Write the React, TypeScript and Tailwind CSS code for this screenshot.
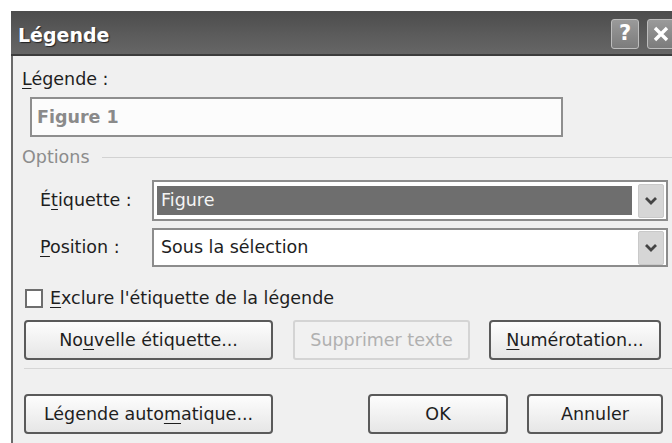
import React from "react";

const font = { fontFamily: '"DejaVu Sans", "Liberation Sans", sans-serif' };

function U({ children }: { children: React.ReactNode }) {
  return <span className="underline decoration-1 underline-offset-[3px]">{children}</span>;
}

function Chevron() {
  return (
    <svg width="14" height="10" viewBox="0 0 14 10">
      <path d="M2 2 L7 7 L12 2" fill="none" stroke="#444444" strokeWidth="2.8" />
    </svg>
  );
}

function Combo({
  value,
  selected,
}: {
  value: string;
  selected?: boolean;
}) {
  return (
    <div className="flex h-full w-[516px] items-center border-2 border-[#8c8c8c] bg-white pl-[3px] pr-[2px]">
      <div className="flex h-full flex-1 items-center py-[4px]">
        <div
          className={
            selected
              ? "flex h-full w-full items-center bg-[#6e6e6e] pl-[4px] text-[#f4f4f4]"
              : "flex h-full w-full items-center pl-[4px] text-[#1e1e1e]"
          }
        >
          {value}
        </div>
      </div>
      <div className="ml-[6px] flex h-[34px] w-[26px] items-center justify-center rounded-[2px] border border-[#c9c9c9] bg-[#d6d6d6]">
        <Chevron />
      </div>
    </div>
  );
}

function Btn({
  children,
  w,
  disabled,
}: {
  children: React.ReactNode;
  w: string;
  disabled?: boolean;
}) {
  return (
    <div
      className={
        disabled
          ? `${w} flex h-[40px] items-center justify-center rounded-[3px] border-2 border-[#d4d4d4] bg-[#f1f1f1] text-[#b0b0b0]`
          : `${w} flex h-[40px] items-center justify-center rounded-[4px] border-2 border-[#5a5a5a] bg-gradient-to-b from-[#fdfdfd] to-[#e6e6e6] text-[#1e1e1e]`
      }
    >
      {children}
    </div>
  );
}

export default function App() {
  return (
    <div className="h-[443px] w-[672px] overflow-hidden bg-white pl-[11px] pt-[11px]" style={font}>
      <div className="flex w-[680px] flex-col">
        {/* title bar */}
        <div className="flex h-[45px] items-center border-b-2 border-[#3c3c3c] bg-gradient-to-b from-[#4c4c4c] via-[#5a5a5a] to-[#666666] pl-[7px] pr-[16px]">
          <span className="pt-[5px] text-[19px] font-bold text-white [text-shadow:1px_1px_1px_#222]">Légende</span>
          <div className="ml-auto flex items-center gap-[8px] pt-[2px]">
            <div className="flex h-[30px] w-[28px] items-center justify-center rounded-[3px] border border-[#bdbdbd] bg-gradient-to-b from-[#9a9a9a] to-[#7c7c7c] text-[21px] font-bold leading-none text-white">
              ?
            </div>
            <div className="flex h-[30px] w-[28px] items-center justify-center rounded-[3px] border border-[#bdbdbd] bg-gradient-to-b from-[#9a9a9a] to-[#7c7c7c]">
              <svg width="18" height="18" viewBox="0 0 18 18">
                <path d="M3 3 L15 15 M15 3 L3 15" stroke="#fff" strokeWidth="3.4" />
              </svg>
            </div>
          </div>
        </div>

        {/* body */}
        <div className="flex h-[400px] flex-col border-l-2 border-[#6a6a6a] bg-[#f0f0f0] text-[17.5px] text-[#1e1e1e]">
          <div className="ml-[9px] mt-[10px] leading-[26px]">
            <U>L</U>égende :
          </div>
          <div className="ml-[17px] mt-[5px] flex h-[40px] w-[533px] items-center border-2 border-[#8e8e8e] bg-[#fcfcfc] pl-[5px] font-bold text-[#8a8a8a]">
            Figure 1
          </div>

          {/* options group */}
          <div className="ml-[9px] mt-[9px] flex h-[22px] items-center">
            <span className="leading-[22px] text-[#8c8c8c]">Options</span>
            <div className="ml-[12px] h-px flex-1 bg-[#d2d2d2]" />
          </div>

          <div className="mt-[12px] flex h-[41px] items-center">
            <div className="w-[139px] pl-[27px]">
              É<U>t</U>iquette :
            </div>
            <Combo value="Figure" selected />
          </div>
          <div className="mt-[7px] flex h-[39px] items-center">
            <div className="w-[139px] pl-[27px]">
              <U>P</U>osition :
            </div>
            <Combo value="Sous la sélection" />
          </div>

          <div className="ml-[12px] mt-[22px] flex h-[19px] items-center">
            <div className="h-[19px] w-[18px] border-2 border-[#6e6e6e] bg-white" />
            <span className="ml-[7px]">
              <U>E</U>xclure l'étiquette de la légende
            </span>
          </div>

          <div className="ml-[11px] mt-[12px] flex items-center">
            <Btn w="w-[249px]">
              No<U>u</U>velle étiquette...
            </Btn>
            <div className="ml-[20px]">
              <Btn w="w-[177px]" disabled>
                Supprimer texte
              </Btn>
            </div>
            <div className="ml-[19px]">
              <Btn w="w-[172px]">
                <U>N</U>umérotation...
              </Btn>
            </div>
          </div>

          <div className="ml-[11px] mt-[8px] h-px w-[650px] bg-[#d6d6d6]" />

          <div className="ml-[11px] mt-[25px] flex items-center">
            <Btn w="w-[249px]">
              Légende auto<U>m</U>atique...
            </Btn>
            <div className="ml-[95px]">
              <Btn w="w-[140px]">OK</Btn>
            </div>
            <div className="ml-[19px]">
              <Btn w="w-[136px]">Annuler</Btn>
            </div>
          </div>
        </div>
      </div>
    </div>
  );
}
